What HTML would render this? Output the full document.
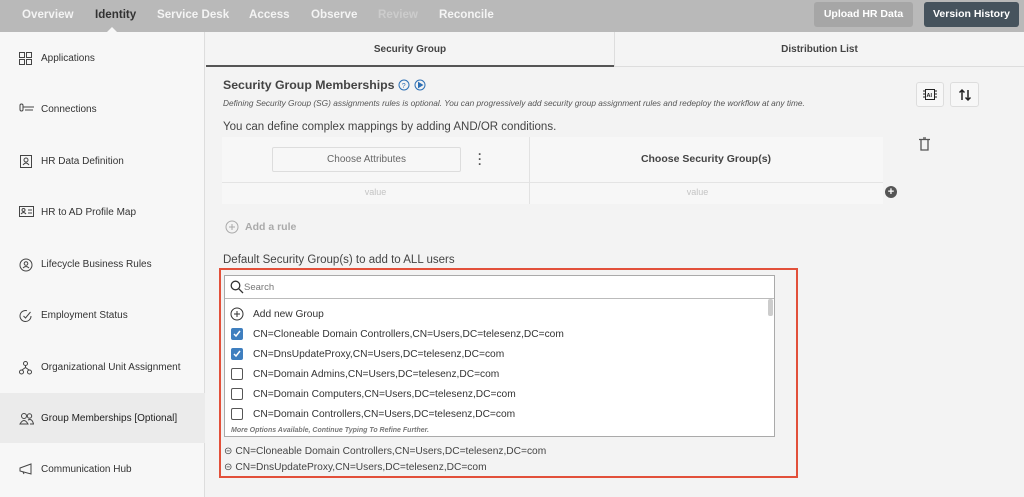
<!DOCTYPE html>
<html><head><meta charset="utf-8"><style>
*{box-sizing:border-box;margin:0;padding:0}
body{width:1024px;height:497px;overflow:hidden;font-family:"Liberation Sans",Arial,sans-serif;background:#f3f3f3;position:relative;color:#333}
.top{position:absolute;left:0;top:0;width:1024px;height:32px;background:#b9b9b9}
.nav{position:absolute;top:8px;font-size:11.6px;font-weight:bold;color:#f4f4f4}
.btn{position:absolute;top:2px;height:25px;border-radius:3px;font-size:10.5px;font-weight:bold;color:#fff;text-align:center;line-height:25px}
.side{position:absolute;left:0;top:32px;width:205px;height:465px;background:#f7f7f7;border-right:1px solid #ddd}
.si{position:absolute;left:0;width:205px;height:50px;font-size:10px;color:#333;line-height:52px;padding-left:41px}
.si svg{position:absolute;left:19px;top:19px}
.abs{position:absolute}
.tab{position:absolute;top:32px;height:35px;font-size:10px;font-weight:bold;color:#444;text-align:center;line-height:35px}
.it{position:absolute;left:253px;font-size:10.2px;color:#333}
.cb{position:absolute;left:231px;width:12px;height:12px;border:1px solid #555;border-radius:2px;background:#fff}
.cb.on{background:#3f7fbf;border-color:#3f7fbf}
.cb svg{position:absolute;left:0;top:0}
</style></head><body>
<div class="top"></div>
<div class="nav" style="left:22px">Overview</div>
<div class="nav" style="left:95px;color:#333">Identity</div>
<div class="nav" style="left:157px">Service Desk</div>
<div class="nav" style="left:249px">Access</div>
<div class="nav" style="left:311px">Observe</div>
<div class="nav" style="left:378px;color:#ccc">Review</div>
<div class="nav" style="left:439px">Reconcile</div>
<div class="abs" style="left:106px;top:27px;width:0;height:0;border-left:6px solid transparent;border-right:6px solid transparent;border-bottom:6px solid #f7f7f7"></div>
<div class="btn" style="left:814px;width:99px;background:#a6a6a6">Upload HR Data</div>
<div class="btn" style="left:924px;width:95px;background:#46535d">Version History</div>

<div class="side">
<div class="si" style="top:1px"><svg width="13" height="13" viewBox="0 0 13 13" fill="none" stroke="#444"><rect x=".5" y=".5" width="5" height="5"/><rect x="7.5" y=".5" width="5" height="5"/><rect x=".5" y="7.5" width="5" height="5"/><rect x="7.5" y="7.5" width="5" height="5"/></svg>Applications</div>
<div class="si" style="top:52px"><svg width="16" height="10" viewBox="0 0 16 10" fill="none" stroke="#444"><rect x="1" y="1" width="3" height="7" rx="1.5"/><path d="M4 4h11M6 7h8"/></svg>Connections</div>
<div class="si" style="top:104px"><svg width="13" height="13" viewBox="0 0 13 13" fill="none" stroke="#444"><rect x="1.5" y=".5" width="11" height="12"/><circle cx="7" cy="5" r="2"/><path d="M4 10q3-4 6 0"/></svg>HR Data Definition</div>
<div class="si" style="top:155px"><svg width="15" height="11" viewBox="0 0 15 11" fill="none" stroke="#444"><rect x=".5" y=".5" width="14" height="10"/><circle cx="4.5" cy="4" r="1.5"/><path d="M2 8q2.5-3 5 0M9 4h4M9 7h4"/></svg>HR to AD Profile Map</div>
<div class="si" style="top:207px"><svg width="14" height="14" viewBox="0 0 14 14" fill="none" stroke="#444"><circle cx="7" cy="7" r="6"/><circle cx="7" cy="5.5" r="1.8"/><path d="M4 10q3-3 6 0"/></svg>Lifecycle Business Rules</div>
<div class="si" style="top:258px"><svg width="14" height="14" viewBox="0 0 14 14" fill="none" stroke="#444"><path d="M12 7A5.5 5.5 0 1 1 8 1.7"/><path d="M4.5 7l2 2 5-6"/></svg>Employment Status</div>
<div class="si" style="top:310px"><svg width="13" height="14" viewBox="0 0 13 14" fill="none" stroke="#444"><circle cx="6.5" cy="2.5" r="2"/><circle cx="2.5" cy="11" r="2"/><circle cx="10.5" cy="11" r="2"/><path d="M6.5 4.5v2M3 9l3.5-2.5L10 9"/></svg>Organizational Unit Assignment</div>
<div class="si" style="top:361px;background:#ebebeb;color:#222"><svg width="15" height="13" viewBox="0 0 15 13" fill="none" stroke="#444"><circle cx="5" cy="4" r="2.5"/><circle cx="10.5" cy="4" r="2.2"/><path d="M1 12q4-7 8 0zM9 8q4-2 5.5 4H11"/></svg>Group Memberships [Optional]</div>
<div class="si" style="top:412px"><svg width="15" height="12" viewBox="0 0 15 12" fill="none" stroke="#444"><path d="M1 5v3l11 3V1z M4 9l1 2"/></svg>Communication Hub</div>
</div>

<div class="tab" style="left:206px;width:408px;background:#f4f4f4;border-bottom:2px solid #555">Security Group</div>
<div class="tab" style="left:614px;width:410px;background:#f4f4f4;border-left:1px solid #ddd;border-bottom:1px solid #ddd">Distribution List</div>

<div class="abs" style="left:223px;top:78px;font-size:12.3px;font-weight:bold;color:#444">Security Group Memberships</div>
<svg class="abs" style="left:398px;top:79px" width="30" height="12" viewBox="0 0 30 12" fill="none" stroke="#2c6fb4"><circle cx="6" cy="6" r="5"/><text x="3.8" y="9" font-size="7" fill="#2c6fb4" stroke="none" font-family="Liberation Sans">?</text><circle cx="22" cy="6" r="5"/><path d="M20.5 3.5l4 2.5-4 2.5z" fill="#2c6fb4"/></svg>
<div class="abs" style="left:223px;top:98px;font-size:8.3px;font-style:italic;color:#555;white-space:nowrap">Defining Security Group (SG) assignments rules is optional. You can progressively add security group assignment rules and redeploy the workflow at any time.</div>
<div class="abs" style="left:223px;top:121px;font-size:11.5px;color:#444">You can define complex mappings by adding AND/OR conditions.</div>

<div class="abs" style="left:916px;top:82px;width:28px;height:25px;border:1px solid #ddd;border-radius:3px;background:#f7f7f7"><svg style="margin:5px 6px" width="14" height="13" viewBox="0 0 14 13" fill="none" stroke="#222"><rect x="2.5" y="1.5" width="9" height="10"/><text x="3.5" y="9" font-size="5.5" font-weight="bold" fill="#222" stroke="none" font-family="Liberation Sans">AI</text><path d="M0 3h2M0 6h2M0 9h2M12 3h2M12 6h2M12 9h2"/></svg></div>
<div class="abs" style="left:950px;top:82px;width:29px;height:25px;border:1px solid #ddd;border-radius:3px;background:#f7f7f7"><svg style="margin:5px 7px" width="14" height="14" viewBox="0 0 14 14" fill="none" stroke="#222" stroke-width="1.5"><path d="M4 12V2M1.5 4.5L4 2l2.5 2.5M10 2v10M7.5 9.5L10 12l2.5-2.5"/></svg></div>
<svg class="abs" style="left:919px;top:137px" width="11" height="14" viewBox="0 0 11 14" fill="none" stroke="#555" stroke-width="1.3"><path d="M0 2.5h11M4 1h3M2 3v10h7V3"/></svg>

<div class="abs" style="left:222px;top:137px;width:661px;height:67px;background:#f7f7f7"></div>
<div class="abs" style="left:222px;top:182px;width:661px;height:1px;background:#e4e4e4"></div>
<div class="abs" style="left:529px;top:137px;width:1px;height:67px;background:#e2e2e2"></div>
<div class="abs" style="left:272px;top:147px;width:189px;height:25px;border:1px solid #ddd;border-radius:2px;background:#f7f7f7;font-size:10px;color:#666;text-align:center;line-height:23px">Choose Attributes</div>
<div class="abs" style="left:478px;top:152px;font-size:12px;color:#555;font-weight:bold;line-height:5px">·<br>·<br>·</div>
<div class="abs" style="left:529px;top:153px;width:354px;font-size:10.5px;font-weight:bold;color:#444;text-align:center">Choose Security Group(s)</div>
<div class="abs" style="left:222px;top:187px;width:307px;text-align:center;font-size:9px;color:#c4c4c4">value</div>
<div class="abs" style="left:529px;top:187px;width:337px;text-align:center;font-size:9px;color:#c4c4c4">value</div>
<div class="abs" style="left:885px;top:186px;width:12px;height:12px;border-radius:50%;background:#555;color:#fff;font-size:11px;font-weight:bold;line-height:12px;text-align:center">+</div>

<svg class="abs" style="left:225px;top:220px" width="14" height="14" viewBox="0 0 14 14" fill="none" stroke="#aaa"><circle cx="7" cy="7" r="6"/><path d="M7 4v6M4 7h6"/></svg>
<div class="abs" style="left:245px;top:221px;font-size:10.5px;font-weight:bold;color:#aaa">Add a rule</div>
<div class="abs" style="left:223px;top:254px;font-size:11.5px;color:#444">Default Security Group(s) to add to ALL users</div>

<div class="abs" style="left:219px;top:268px;width:579px;height:210px;border:2px solid #e2503a"></div>
<div class="abs" style="left:224px;top:275px;width:551px;height:162px;border:1px solid #aaa;background:#fff"></div>
<div class="abs" style="left:225px;top:298px;width:549px;height:1px;background:#bbb"></div>
<div class="abs" style="left:768px;top:299px;width:5px;height:17px;background:#ccc;border-radius:2px"></div>
<svg class="abs" style="left:230px;top:280px" width="14" height="14" viewBox="0 0 14 14" fill="none" stroke="#333" stroke-width="1.3"><circle cx="5.5" cy="5.5" r="4.3"/><path d="M8.7 8.7L13 13"/></svg>
<div class="abs" style="left:244px;top:282px;font-size:9.5px;color:#777">Search</div>
<svg class="abs" style="left:230px;top:307px" width="14" height="14" viewBox="0 0 14 14" fill="none" stroke="#333"><circle cx="7" cy="7" r="6"/><path d="M7 4v6M4 7h6"/></svg>
<div class="it" style="top:309px">Add new Group</div>
<div class="cb on" style="top:328px"><svg width="10" height="10" viewBox="0 0 10 10" fill="none" stroke="#fff" stroke-width="1.5"><path d="M2 5l2 2 4-5"/></svg></div>
<div class="it" style="top:329px">CN=Cloneable Domain Controllers,CN=Users,DC=telesenz,DC=com</div>
<div class="cb on" style="top:348px"><svg width="10" height="10" viewBox="0 0 10 10" fill="none" stroke="#fff" stroke-width="1.5"><path d="M2 5l2 2 4-5"/></svg></div>
<div class="it" style="top:349px">CN=DnsUpdateProxy,CN=Users,DC=telesenz,DC=com</div>
<div class="cb" style="top:368px"></div>
<div class="it" style="top:369px">CN=Domain Admins,CN=Users,DC=telesenz,DC=com</div>
<div class="cb" style="top:388px"></div>
<div class="it" style="top:389px">CN=Domain Computers,CN=Users,DC=telesenz,DC=com</div>
<div class="cb" style="top:408px"></div>
<div class="it" style="top:409px">CN=Domain Controllers,CN=Users,DC=telesenz,DC=com</div>
<div class="abs" style="left:231px;top:427px;font-size:7px;font-style:italic;font-weight:bold;color:#777">More Options Available, Continue Typing To Refine Further.</div>
<div class="abs" style="left:224px;top:446px;font-size:10.2px;color:#444">⊝ CN=Cloneable Domain Controllers,CN=Users,DC=telesenz,DC=com</div>
<div class="abs" style="left:224px;top:462px;font-size:10.2px;color:#444">⊝ CN=DnsUpdateProxy,CN=Users,DC=telesenz,DC=com</div>
</body></html>
